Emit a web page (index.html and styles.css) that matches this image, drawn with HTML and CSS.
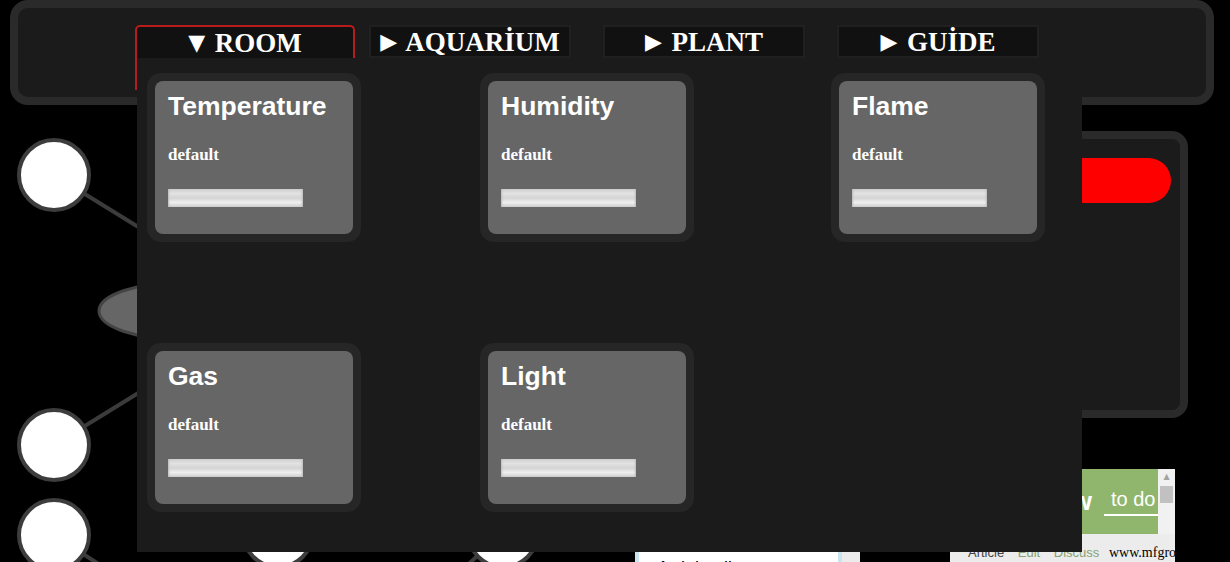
FILE: index.html
```html
<!DOCTYPE html>
<html lang="tr">
<head>
    <meta charset="UTF-8">
    <meta name="viewport" content="width=device-width, initial-scale=1.0">
    <title>Smart Home Panel</title>
    <link rel="stylesheet" href="styles.css">
</head>
<body>
    <header class="topbar">
        <nav class="tabs">
            <div class="tab active">
                <div class="tab-head"><span class="arrow">&#9660;</span> ROOM</div>
                <div class="dropdown">
                    <div class="card-wrap">
                        <div class="card">
                            <h3>Temperature</h3>
                            <p class="mode">default</p>
                            <div class="bar"></div>
                        </div>
                    </div>
                    <div class="card-wrap">
                        <div class="card">
                            <h3>Humidity</h3>
                            <p class="mode">default</p>
                            <div class="bar"></div>
                        </div>
                    </div>
                    <div class="card-wrap">
                        <div class="card">
                            <h3>Flame</h3>
                            <p class="mode">default</p>
                            <div class="bar"></div>
                        </div>
                    </div>
                    <div class="card-wrap">
                        <div class="card">
                            <h3>Gas</h3>
                            <p class="mode">default</p>
                            <div class="bar"></div>
                        </div>
                    </div>
                    <div class="card-wrap">
                        <div class="card">
                            <h3>Light</h3>
                            <p class="mode">default</p>
                            <div class="bar"></div>
                        </div>
                    </div>
                </div>
            </div>
            <div class="tab"><span class="arrow">&#9654;</span> AQUARİUM</div>
            <div class="tab"><span class="arrow">&#9654;</span> PLANT</div>
            <div class="tab"><span class="arrow">&#9654;</span> GUİDE</div>
        </nav>
    </header>

    <main class="board">
        <!-- node diagram behind the panels -->
        <svg class="diagram" width="1230" height="457" viewBox="0 105 1230 457">
            <g stroke="#3b3b3b" stroke-width="4">
                <line x1="54" y1="175" x2="200" y2="265"/>
                <line x1="54" y1="445" x2="200" y2="355"/>
                <line x1="54" y1="535" x2="160" y2="604"/>
                <line x1="503" y1="532" x2="430" y2="600"/>
            </g>
            <ellipse cx="185" cy="311" rx="86" ry="29" fill="#666" stroke="#444" stroke-width="3"/>
            <g fill="#fff" stroke="#3d3d3d" stroke-width="4">
                <circle cx="54" cy="175" r="35"/>
                <circle cx="54" cy="445" r="35"/>
                <circle cx="54" cy="535" r="35"/>
                <circle cx="278" cy="532" r="35"/>
                <circle cx="503" cy="532" r="35"/>
            </g>
        </svg>

        <section class="status">
            <div class="pill"></div>
        </section>

        <div class="article-box">
            <div class="article-card">Arduino ile</div>
        </div>

        <div class="wiki-box">
            <div class="wiki-top">
                <div class="wiki-head">
                    <span class="wiki-logo">wiki<b>How</b></span>
                    <span class="wiki-tag">to do anything</span>
                </div>
                <div class="wiki-scroll">
                    <span class="scroll-up">&#9650;</span>
                    <div class="scroll-thumb"></div>
                </div>
            </div>
            <div class="wiki-links">
                <span class="link-main">Article</span>
                <span class="link">Edit</span>
                <span class="link">Discuss</span>
                <span class="watermark">www.mfgrobots.com</span>
            </div>
        </div>
    </main>
</body>
</html>
```

FILE: styles.css
```css
html, body {
    height: 100%;
}
body {
    margin: 0;
    background-color: #000;
    overflow: hidden;
    font-family: "Liberation Sans", Arial, sans-serif;
}

/* top bar with tabs */
.topbar {
    position: relative;
    z-index: 2;
    height: 105px;
    margin: 0 16px 0 10px;
    box-sizing: border-box;
    border: 8px solid #2a2a2a;
    border-radius: 18px;
    background-color: #1b1b1b;
    padding: 17px 0 0 117px;
}
.tabs {
    display: flex;
    align-items: flex-start;
    gap: 32px;
}
.tab {
    width: 198px;
    height: 29px;
    border: 2px solid #202020;
    background-color: #111;
    color: #fff;
    font: bold 27px/29px "Liberation Serif", "Times New Roman", serif;
    text-align: center;
    white-space: nowrap;
}
.tab .arrow {
    font-family: "DejaVu Sans", sans-serif;
    font-size: 22px;
    font-weight: normal;
    margin-right: 3px;
    vertical-align: 2px;
}
.tab.active {
    position: relative;
    width: 216px;
    height: 63px;
    border-color: #b71c1c;
    border-bottom: 0;
    border-radius: 5px 5px 0 0;
    margin-right: -18px;
}
.tab-head {
    line-height: 31px;
}

/* dropdown with sensor cards */
.dropdown {
    position: absolute;
    top: 31px;
    left: 0;
    z-index: 3;
    width: 945px;
    height: 494px;
    box-sizing: border-box;
    padding: 15px 0 0 10px;
    background-color: #1b1b1b;
    display: grid;
    grid-template-columns: 333px 351px 214px;
    row-gap: 101px;
    align-content: start;
    text-align: left;
}
.card-wrap {
    justify-self: start;
    padding: 8px;
    border-radius: 14px;
    background-color: #262626;
}
.card {
    width: 198px;
    height: 153px;
    box-sizing: border-box;
    padding: 10px 13px 0;
    border-radius: 8px;
    background-color: #666;
    color: #fff;
}
.card h3 {
    margin: 0;
    font: bold 26.5px/30px "Liberation Sans", Arial, sans-serif;
}
.mode {
    margin: 24px 0 0;
    font: bold 17px/20px "Liberation Serif", "Times New Roman", serif;
}
.bar {
    width: 135px;
    height: 18px;
    margin-top: 24px;
    background: linear-gradient(#cfcfcf, #e2e2e2 25%, #d4d4d4 50%, #efefef 75%, #cdcdcd);
    box-shadow: inset 2px 0 2px -1px #bbb, inset -2px 0 2px -1px #bbb;
}

/* board under the bar */
.board {
    position: relative;
    height: 457px;
    box-sizing: border-box;
    padding: 26px 42px 0 0;
    display: flex;
    justify-content: flex-end;
    align-items: flex-start;
}
.diagram {
    position: absolute;
    left: 0;
    top: 0;
}
.status {
    position: relative;
    width: 300px;
    height: 287px;
    box-sizing: border-box;
    border: 8px solid #2a2a2a;
    border-radius: 16px;
    background-color: #1b1b1b;
    padding: 19px 9px;
    display: flex;
    justify-content: flex-end;
    align-items: flex-start;
}
.pill {
    width: 130px;
    height: 45px;
    border-radius: 23px;
    background-color: #f00;
}

/* embedded snippets at the bottom */
.article-box {
    position: absolute;
    left: 635px;
    top: 425px;
    width: 225px;
    height: 40px;
    background-color: #ececec;
}
.article-card {
    width: 207px;
    height: 100%;
    box-sizing: border-box;
    border: 4px solid #c9e5ef;
    padding: 23px 0 0 18px;
    background-color: #fff;
    color: #000;
    font-size: 18px;
    line-height: 22px;
}
.wiki-box {
    position: absolute;
    left: 950px;
    top: 364px;
    width: 225px;
    height: 93px;
    overflow: hidden;
    background-color: #ececec;
}
.wiki-top {
    display: flex;
    height: 65px;
}
.wiki-head {
    width: 208px;
    overflow: hidden;
    display: flex;
    align-items: center;
    background-color: #90b66e;
    color: #fff;
    white-space: nowrap;
}
.wiki-logo {
    width: 142px;
    flex-shrink: 0;
    text-align: right;
    font-size: 26px;
}
.wiki-tag {
    margin-left: 12px;
    padding: 0 0 3px 7px;
    border-bottom: 2px solid #fff;
    font-size: 20px;
    line-height: 23px;
}
.wiki-scroll {
    width: 17px;
    background-color: #f1f1f1;
    display: flex;
    flex-direction: column;
    align-items: center;
}
.scroll-up {
    font-family: "DejaVu Sans", sans-serif;
    font-size: 8px;
    line-height: 16px;
    color: #a3a3a3;
}
.scroll-thumb {
    width: 13px;
    height: 17px;
    margin-top: 1px;
    background-color: #c1c1c1;
}
.wiki-links {
    padding: 11px 0 0 18px;
    font-size: 13px;
    line-height: 16px;
    white-space: nowrap;
}
.link-main {
    color: #444;
}
.link {
    margin-left: 10px;
    color: #86a276;
}
.watermark {
    margin-left: 6px;
    color: #000;
    font-family: "Liberation Serif", "Times New Roman", serif;
    font-size: 14px;
}
```
